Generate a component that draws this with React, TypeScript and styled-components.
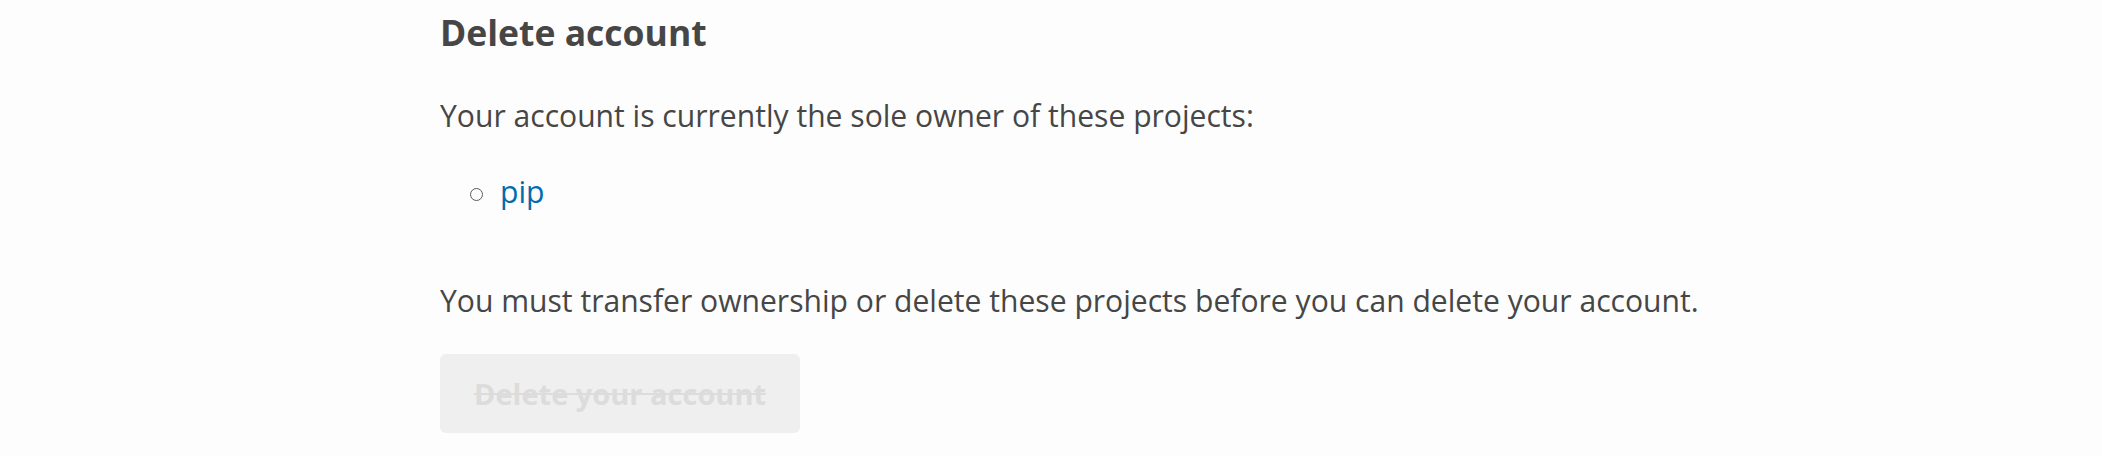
import * as React from 'react';
import styled, { createGlobalStyle } from 'styled-components';

const GlobalStyle = createGlobalStyle`
  html, body {
    margin: 0;
    padding: 0;
    background: #fdfdfd;
  }
  body {
    font-family: 'Open Sans', 'Liberation Sans', sans-serif;
    color: #464646;
  }
`;

const Section = styled.section`
  padding: 11px 0 0 440px;
  width: 1400px;
`;

const Heading = styled.h2`
  margin: 0;
  font-size: 35.5px;
  line-height: 42px;
  font-weight: 700;
  color: #464646;
`;

const Paragraph = styled.p<{ gap: number }>`
  margin: ${({ gap }) => gap}px 0 0;
  font-size: 30.1px;
  line-height: 45px;
`;

const ProjectList = styled.ul`
  list-style: none;
  margin: 31px 0 0;
  padding: 0 0 0 30px;
`;

const ProjectItem = styled.li`
  display: flex;
  align-items: center;
  gap: 17px;
  font-size: 30.1px;
  line-height: 45px;
`;

const Bullet = styled.span`
  width: 13px;
  height: 13px;
  margin-top: 5px;
  box-sizing: border-box;
  border: 1px solid #5a5a5a;
  border-radius: 50%;
  flex: 0 0 auto;
`;

const ProjectLink = styled.a`
  color: #006dad;
  text-decoration: none;
`;

const DangerButton = styled.button`
  display: block;
  margin-top: 31px;
  height: 79px;
  padding: 0 34px;
  border: none;
  border-radius: 6px;
  background: #efefef;
  color: #dcdcdc;
  font-family: 'Open Sans', 'Liberation Sans', sans-serif;
  font-size: 29px;
  font-weight: 700;
  line-height: 79px;
  text-decoration: line-through;
  cursor: not-allowed;
`;

const projects = ['pip'];

export default function App() {
  return (
    <>
      <GlobalStyle />
      <Section>
        <Heading>Delete account</Heading>
        <Paragraph gap={40}>Your account is currently the sole owner of these projects:</Paragraph>
        <ProjectList>
          {projects.map((name) => (
            <ProjectItem key={name}>
              <Bullet />
              <ProjectLink href="#">{name}</ProjectLink>
            </ProjectItem>
          ))}
        </ProjectList>
        <Paragraph gap={64}>
          You must transfer ownership or delete these projects before you can delete your account.
        </Paragraph>
        <DangerButton disabled>Delete your account</DangerButton>
      </Section>
    </>
  );
}
